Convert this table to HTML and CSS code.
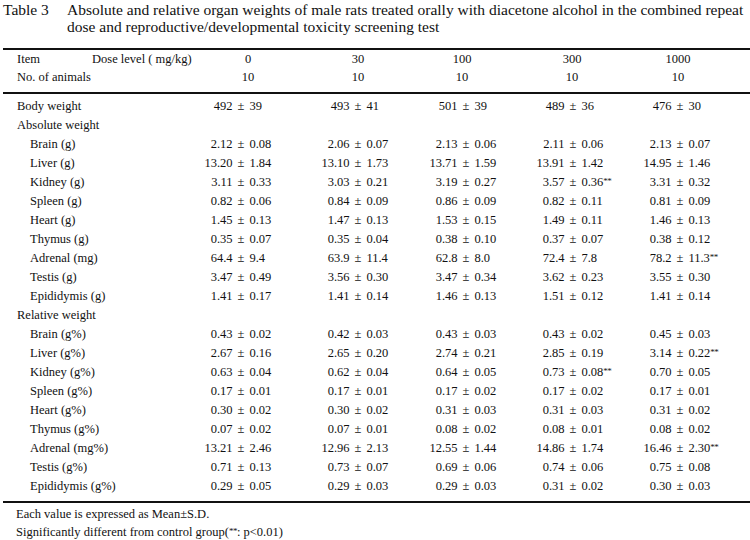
FILE: index.html
```html
<!DOCTYPE html>
<html lang="en">
<head>
<meta charset="utf-8">
<title>Table 3</title>
<link rel="stylesheet" href="styles.css">
</head>
<body>
<div class="caption">
  <span class="cap-no">Table 3</span>
  <span class="cap-text">Absolute and relative organ weights of male rats treated orally with diacetone alcohol in the combined repeat<br>dose and reproductive/developmental toxicity screening test</span>
</div>

<div class="table">
  <div class="head">
    <div class="lab"><span class="item">Item</span><span>Dose level ( mg/kg)</span></div>
    <div class="hc">0</div><div class="hc">30</div><div class="hc">100</div><div class="hc">300</div><div class="hc">1000</div>
    <div class="lab">No. of animals</div>
    <div class="hc">10</div><div class="hc">10</div><div class="hc">10</div><div class="hc">10</div><div class="hc">10</div>
  </div>

  <div class="body" id="body"></div>
</div>

<div class="notes">
  <p>Each value is expressed as Mean±S.D.</p>
  <p>Significantly different from control group(<span class="sig">**</span>: p&lt;0.01)</p>
</div>

<script src="script.js"></script>
</body>
</html>
```

FILE: script.js
```js
const rows = [
  ["Body weight", 0, ["492","39"],["493","41"],["501","39"],["489","36"],["476","30"]],
  ["Absolute weight", 2],
  ["Brain (g)", 1, ["2.12","0.08"],["2.06","0.07"],["2.13","0.06"],["2.11","0.06"],["2.13","0.07"]],
  ["Liver (g)", 1, ["13.20","1.84"],["13.10","1.73"],["13.71","1.59"],["13.91","1.42"],["14.95","1.46"]],
  ["Kidney (g)", 1, ["3.11","0.33"],["3.03","0.21"],["3.19","0.27"],["3.57","0.36","**"],["3.31","0.32"]],
  ["Spleen (g)", 1, ["0.82","0.06"],["0.84","0.09"],["0.86","0.09"],["0.82","0.11"],["0.81","0.09"]],
  ["Heart (g)", 1, ["1.45","0.13"],["1.47","0.13"],["1.53","0.15"],["1.49","0.11"],["1.46","0.13"]],
  ["Thymus (g)", 1, ["0.35","0.07"],["0.35","0.04"],["0.38","0.10"],["0.37","0.07"],["0.38","0.12"]],
  ["Adrenal (mg)", 1, ["64.4","9.4"],["63.9","11.4"],["62.8","8.0"],["72.4","7.8"],["78.2","11.3","**"]],
  ["Testis (g)", 1, ["3.47","0.49"],["3.56","0.30"],["3.47","0.34"],["3.62","0.23"],["3.55","0.30"]],
  ["Epididymis (g)", 1, ["1.41","0.17"],["1.41","0.14"],["1.46","0.13"],["1.51","0.12"],["1.41","0.14"]],
  ["Relative weight", 2],
  ["Brain (g%)", 1, ["0.43","0.02"],["0.42","0.03"],["0.43","0.03"],["0.43","0.02"],["0.45","0.03"]],
  ["Liver (g%)", 1, ["2.67","0.16"],["2.65","0.20"],["2.74","0.21"],["2.85","0.19"],["3.14","0.22","**"]],
  ["Kidney (g%)", 1, ["0.63","0.04"],["0.62","0.04"],["0.64","0.05"],["0.73","0.08","**"],["0.70","0.05"]],
  ["Spleen (g%)", 1, ["0.17","0.01"],["0.17","0.01"],["0.17","0.02"],["0.17","0.02"],["0.17","0.01"]],
  ["Heart (g%)", 1, ["0.30","0.02"],["0.30","0.02"],["0.31","0.03"],["0.31","0.03"],["0.31","0.02"]],
  ["Thymus (g%)", 1, ["0.07","0.02"],["0.07","0.01"],["0.08","0.02"],["0.08","0.01"],["0.08","0.02"]],
  ["Adrenal (mg%)", 1, ["13.21","2.46"],["12.96","2.13"],["12.55","1.44"],["14.86","1.74"],["16.46","2.30","**"]],
  ["Testis (g%)", 1, ["0.71","0.13"],["0.73","0.07"],["0.69","0.06"],["0.74","0.06"],["0.75","0.08"]],
  ["Epididymis (g%)", 1, ["0.29","0.05"],["0.29","0.03"],["0.29","0.03"],["0.31","0.02"],["0.30","0.03"]]
];

const body = document.getElementById("body");
for (const r of rows) {
  const lab = document.createElement("div");
  lab.textContent = r[0];
  if (r[1] === 2) { lab.className = "lab group"; body.appendChild(lab); continue; }
  lab.className = r[1] === 1 ? "lab sub" : "lab";
  body.appendChild(lab);
  for (let i = 2; i < 7; i++) {
    const v = r[i];
    const c = document.createElement("div");
    c.className = "val";
    const m = document.createElement("span"); m.className = "mean"; m.textContent = v[0];
    const pm = document.createElement("span"); pm.className = "pm"; pm.textContent = "±";
    const s = document.createElement("span"); s.className = "sd"; s.textContent = v[1];
    if (v[2]) { const g = document.createElement("span"); g.className = "sig"; g.textContent = v[2]; s.appendChild(g); }
    c.append(m, pm, s);
    body.appendChild(c);
  }
}
```

FILE: styles.css
```css
html, body {
  margin: 0;
  padding: 0;
  background: #ffffff;
}
body {
  font-family: "Liberation Serif", "Times New Roman", serif;
  color: #111111;
  font-size: 12.5px;
}
.caption {
  display: flex;
  padding: 1px 0 0 3px;
  font-size: 15.5px;
  line-height: 17px;
  white-space: nowrap;
}
.cap-no {
  width: 64px;
  flex: none;
}
.table {
  margin: 13px 0 0 3px;
}
.head {
  display: grid;
  grid-template-columns: 195px 110px 104px 110px 106px 100px;
  grid-auto-rows: 18px;
  align-items: center;
  border-top: 2px solid #111;
  border-bottom: 2px solid #111;
  padding: 0 0 6px;
}
.head .hc {
  width: 100px;
  text-align: center;
}
.lab {
  padding-left: 14px;
  white-space: nowrap;
  display: flex;
}
.item {
  width: 75px;
}
.body {
  display: grid;
  grid-template-columns: 188px 117px 108px 107px 107px 100px;
  grid-auto-rows: 19px;
  align-items: center;
  padding: 3px 0 5px;
  border-bottom: 2px solid #111;
}
.lab.sub {
  padding-left: 27px;
}
.lab.group {
  grid-column: 1 / -1;
}
.val {
  width: 100px;
  display: grid;
  grid-template-columns: 1fr auto 1fr;
  column-gap: 5px;
  white-space: nowrap;
}
.mean {
  text-align: right;
}
.sd {
  text-align: left;
}
.sig {
  font-size: 9px;
  vertical-align: 2px;
  letter-spacing: -0.5px;
}
.notes {
  margin: 3px 0 0 16px;
  line-height: 17px;
}
.notes p {
  margin: 0;
}
```
